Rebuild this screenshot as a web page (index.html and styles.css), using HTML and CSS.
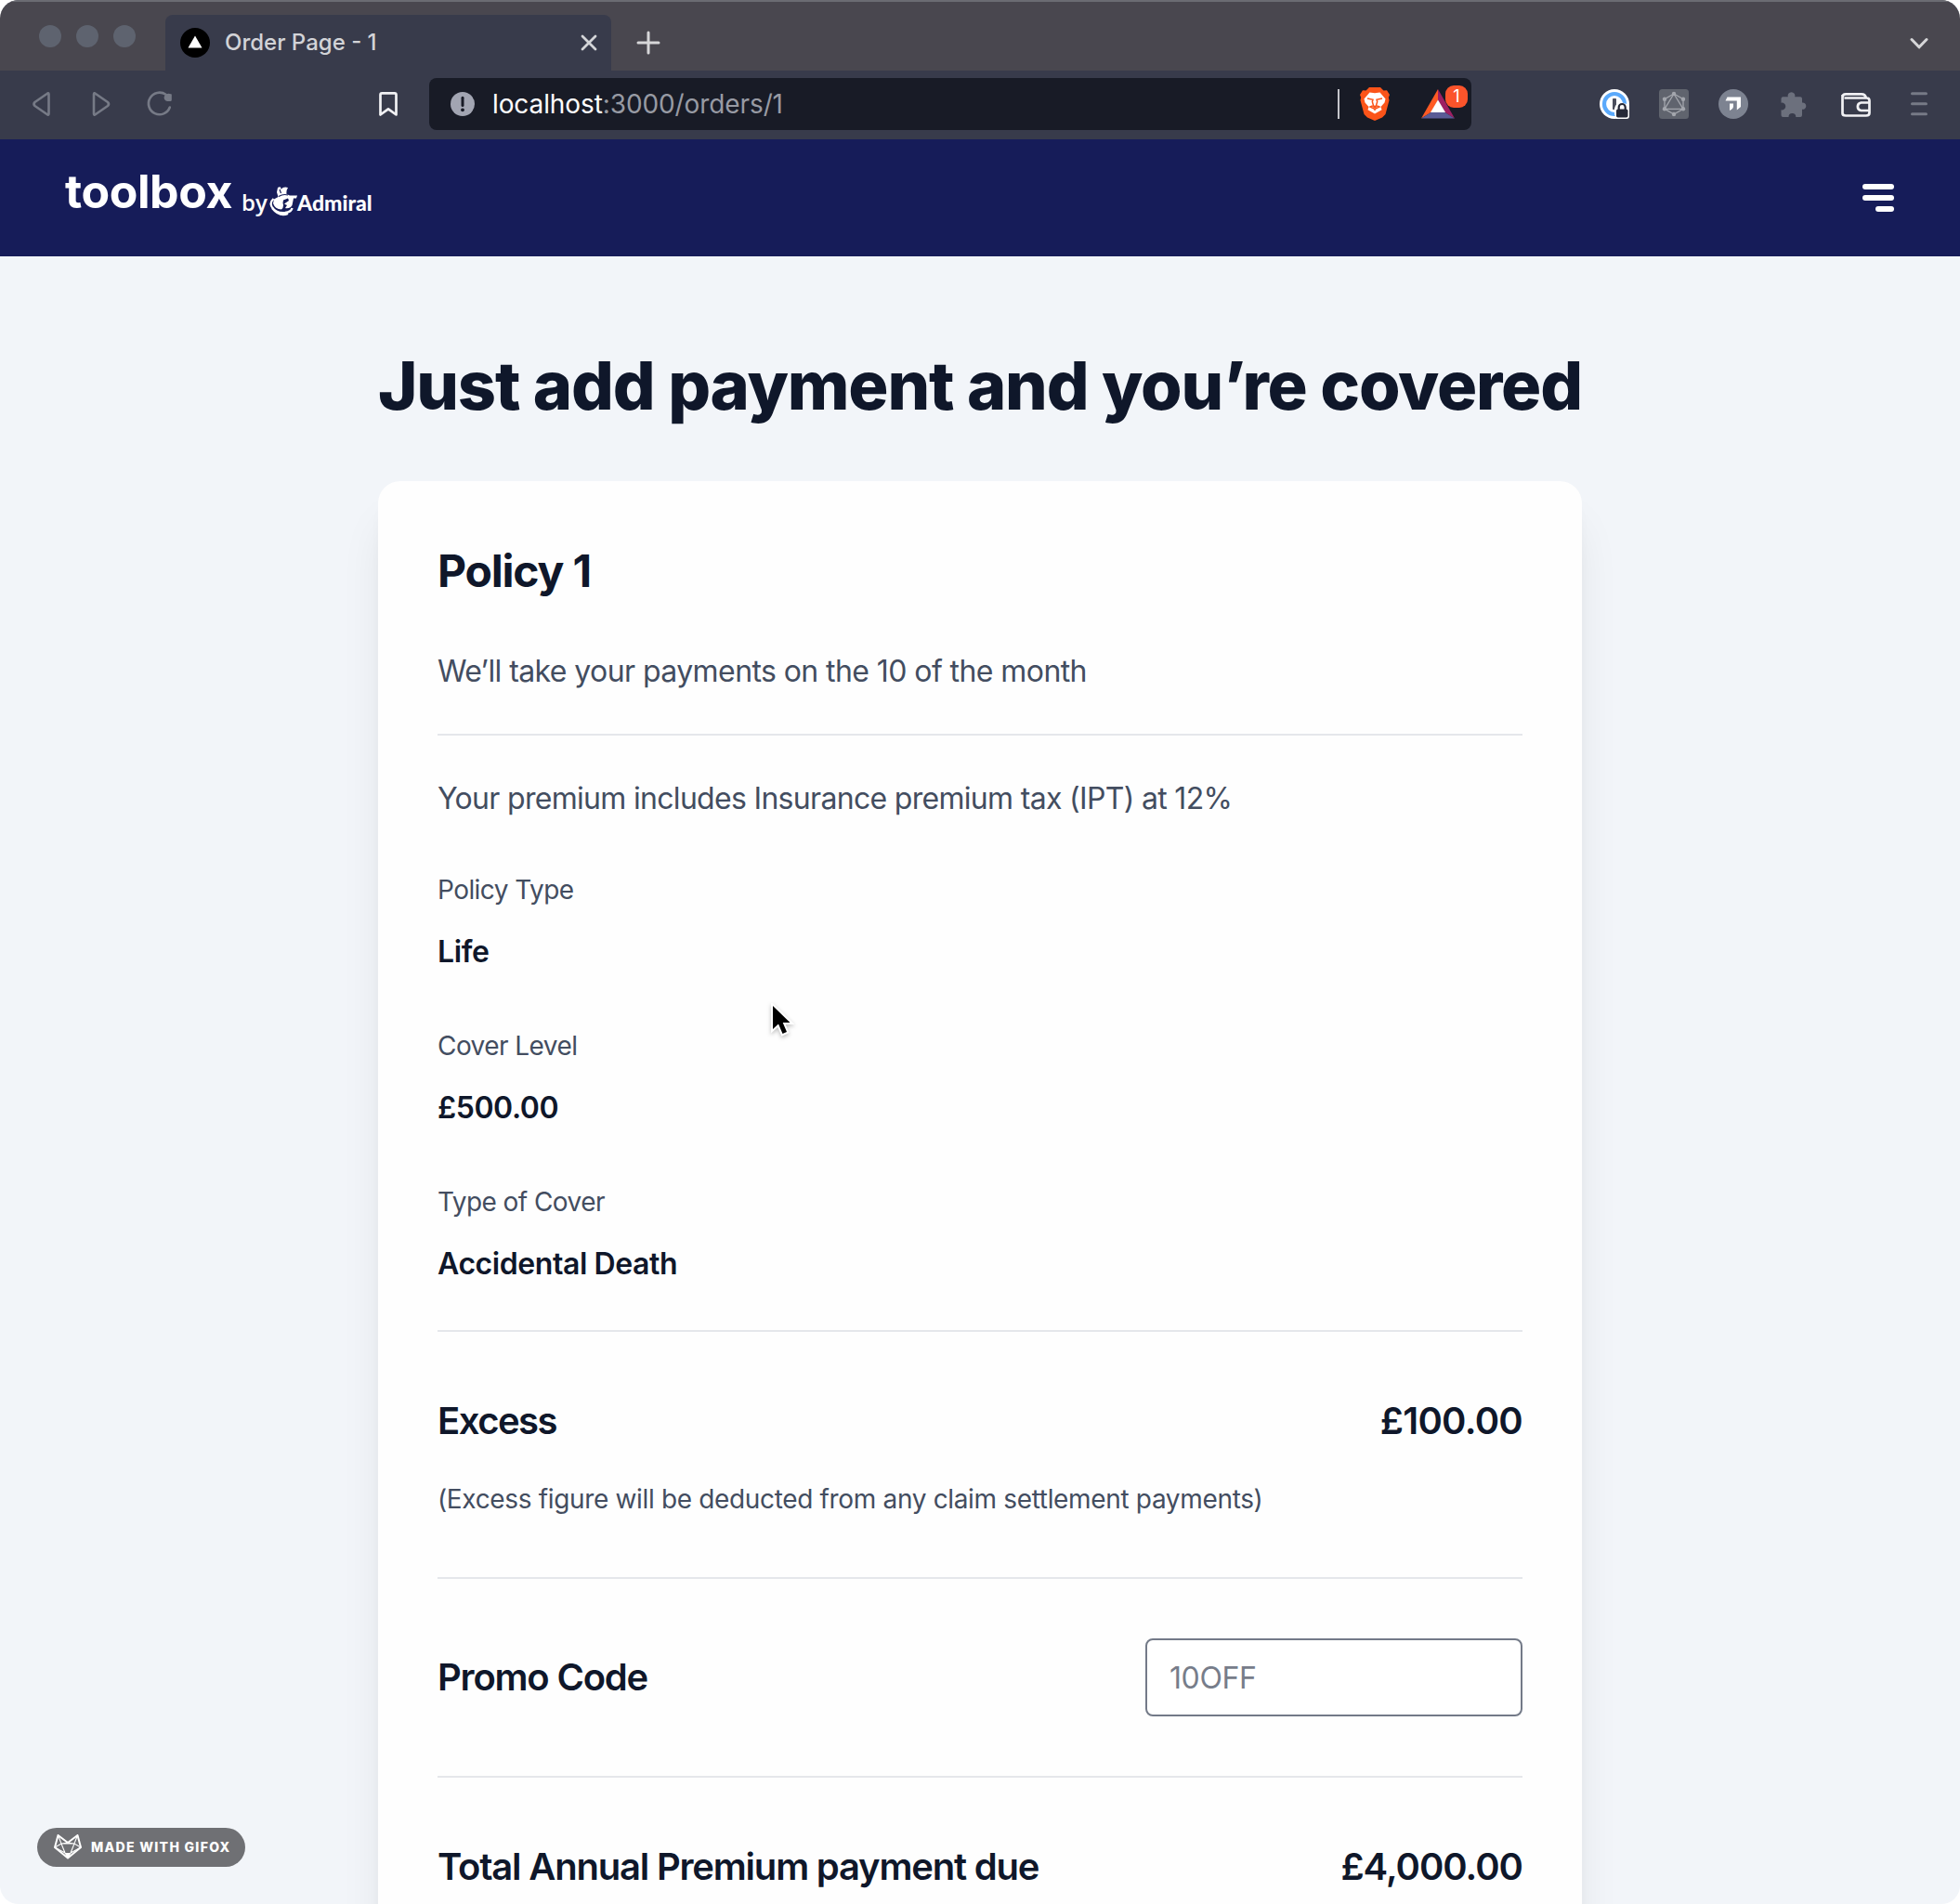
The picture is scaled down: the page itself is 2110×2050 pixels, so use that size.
FILE: index.html
```html
<!DOCTYPE html>
<html lang="en">
<head>
<meta charset="utf-8">
<title>Order Page - 1</title>
<link rel="stylesheet" href="styles.css">
</head>
<body>
<div class="window">
  <div class="tabstrip">
    <div class="lights"><i></i><i></i><i></i></div>
    <div class="tab">
      <svg class="favicon" viewBox="0 0 32 32"><circle cx="16" cy="16" r="16" fill="#000"/><path d="M16 8.500 23.500 21.500H8.500z" fill="#fff"/></svg>
      <span class="tab-title">Order Page - 1</span>
      <svg class="tab-close" viewBox="0 0 18 18"><path d="M2 2 16 16M16 2 2 16" stroke="#d4d5d8" stroke-width="2.800" stroke-linecap="round"/></svg>
    </div>
    <svg class="tab-new" viewBox="0 0 26 26"><path d="M13 2V24M2 13H24" stroke="#d6d6d8" stroke-width="3" stroke-linecap="round"/></svg>
    <svg class="tab-search" viewBox="0 0 20 14"><path d="M2 2.500 10 10.800 18 2.500" fill="none" stroke="#d6d6d8" stroke-width="3" stroke-linecap="round" stroke-linejoin="round"/></svg>
  </div>

  <div class="toolbar">
    <svg class="ico back" viewBox="0 0 32 32"><path d="M23.500 5.500V26.500Q23.500 28.500 21.500 27L8.500 18Q6.500 16 8.500 14L21.500 5Q23.500 3.500 23.500 5.500z" fill="none" stroke="#767a86" stroke-width="2.600" stroke-linejoin="round"/></svg>
    <svg class="ico forward" viewBox="0 0 32 32"><path d="M8 5.500V26.500Q8 28.500 10 27L23 18Q25 16 23 14L10 5Q8 3.500 8 5.500z" fill="none" stroke="#767a86" stroke-width="2.600" stroke-linejoin="round"/></svg>
    <svg class="ico reload" viewBox="0 0 32 32"><path d="M22.500 5.800A11.800 11.800 0 1 0 26.800 19.500" fill="none" stroke="#767a86" stroke-width="2.600" stroke-linecap="round"/><path d="M28.800 5.500V11.500Q28.800 13 27.300 13H24A4 4 0 0 1 21.500 6.500Q24 3.500 28.800 5.500z" fill="#767a86"/></svg>
    <svg class="ico bookmark" viewBox="0 0 32 32"><path d="M7.500 6Q7.500 4.300 9.200 4.300H22.800Q24.500 4.300 24.500 6V27.500L16 21.300 7.500 27.500z" fill="none" stroke="#f1f1f4" stroke-width="2.700" stroke-linejoin="round"/></svg>
    <div class="urlbar">
      <svg class="info" viewBox="0 0 26 26"><circle cx="13" cy="13" r="13" fill="#a2a5b2"/><path d="M13 6.300V14.500" stroke="#181b26" stroke-width="3" stroke-linecap="round"/><circle cx="13" cy="19.300" r="1.900" fill="#181b26"/></svg>
      <span class="url"><b>localhost</b>:3000/orders/1</span>
      <i class="sep"></i>
      <svg class="lion" viewBox="0 0 32 36"><path d="M10 0H22L25.500 3.500 29 3.200 32 8 30.800 11 31.500 14 27.500 29 24 32.500 16 36 8 32.500 4.500 29 .5 14 1.200 11 0 8 3 3.200 6.500 3.500z" fill="#fb5419"/><path d="M16 6.200 21.500 5.600 27.500 12.500 26.500 16.500 22.500 21 23.500 24.300 16 28.500 8.500 24.300 9.500 21 5.500 16.500 4.500 12.500 10.500 5.600z" fill="#fff"/><path d="M8 12 14 13.300 13.300 15.500 14.500 19.500 11 21 16 23.500 21 21 17.500 19.500 18.700 15.500 18 13.300 24 12M16 23.500V25" fill="none" stroke="#fb5419" stroke-width="1.500"/><path d="M13 20.700 16 19.500 19 20.700 16 22.800z" fill="#fb5419"/></svg>
      <div class="bat">
        <svg viewBox="0 0 36 32"><path d="M18 0V12L10.500 25 0 31.500z" fill="#ff5a24"/><path d="M18 0 36 31.500 25.500 25 18 12z" fill="#9e1f63"/><path d="M0 31.500 10.500 25H25.500L36 31.500z" fill="#5a5b96"/><path d="M18 11.500 26 25H10z" fill="#fff"/></svg>
        <span class="badge">1</span>
      </div>
    </div>
    <svg class="ico onepass" viewBox="0 0 32 32"><circle cx="16" cy="16" r="16" fill="#fff"/><circle cx="16" cy="16" r="11" fill="none" stroke="#5aa9fb" stroke-width="4.200"/><rect x="14" y="10" width="4" height="12" rx=".8" fill="#4b4e5c"/><path d="M16 27V21Q17 15 23 14L32 17V29Q32 32 29 32H18Z" fill="#fff"/><rect x="18" y="21.500" width="12.500" height="9" rx="1.800" fill="#262938"/><path d="M20.700 22V19.500A3.500 3.500 0 0 1 27.700 19.500V22" fill="none" stroke="#262938" stroke-width="2.200"/></svg>
    <svg class="ico graphql" viewBox="0 0 32 32"><rect width="32" height="32" rx="3.500" fill="#60646e"/><g fill="none" stroke="#a3a6ad" stroke-width="1.300"><path d="M16 5 26 10.700V21.300L16 27 6 21.300V10.700z"/><path d="M16 5 26 21.300H6z"/></g><g fill="#a3a6ad"><circle cx="16" cy="5" r="2.200"/><circle cx="26" cy="10.700" r="2.200"/><circle cx="26" cy="21.300" r="2.200"/><circle cx="16" cy="27" r="2.200"/><circle cx="6" cy="21.300" r="2.200"/><circle cx="6" cy="10.700" r="2.200"/></g></svg>
    <svg class="ico arrow" viewBox="0 0 32 32"><circle cx="16" cy="16" r="16" fill="#7d8391"/><path d="M9.500 8.500H24V19L19.800 22.500V12.500H7.500z" fill="#fff"/><path d="M12 15.500H16V18.500Q16 21 12 23z" fill="#fff"/></svg>
    <svg class="ico puzzle" viewBox="0 0 32 32"><path d="M4.500 8.300H9.800A3.900 3.900 0 1 1 17.200 8.300H23Q25 8.300 25 10.300V14.500A3.700 3.700 0 1 1 25 21.800V28Q25 30 23 30H18.300A3.900 3.900 0 1 0 10.500 30H4.500Q2.500 30 2.500 28V22.300A3.900 3.900 0 1 0 2.500 14.700V10.300Q2.500 8.300 4.500 8.300z" fill="#6c707d"/></svg>
    <svg class="ico wallet" viewBox="0 0 32 32"><g fill="none" stroke="#f1f1f4" stroke-width="2.700" stroke-linejoin="round"><path d="M1.500 6V26Q1.500 28.500 5 28.500H27Q30.500 28.500 30.500 25.500V12.500Q30.500 9.500 27.500 9.500H3.500M1.500 9Q1.500 5.300 5 5.300H22Q26 5.300 27 9.500"/><path d="M30.500 14.500H21.500A4.300 4.300 0 0 0 21.500 23H30.500"/></g></svg>
    <svg class="ico menu" viewBox="0 0 32 32"><path d="M8.500 4.700H23.500M8.500 15.700H23.500M8.500 26.700H23.500" stroke="#767a86" stroke-width="3" stroke-linecap="round"/></svg>
  </div>

  <header class="site-header">
    <div class="logo">
      <span class="logo-main">toolbox</span>
      <span class="logo-by">by</span>
      <svg class="logo-crest" viewBox="0 0 32 32"><path d="M9 1Q13-1 12.500 3 15-.5 20 1Q18 4 18.500 8L22 9.500H30L29 12.500H26L24.500 20Q22 24 17 23L19 20 16 18.500 21 15 20 12.500 15 14.500 14.500 17.500Q16 22 13 24.500Q6 24 4 18L5 13.500 9.500 11 8 6z" fill="#fff"/><path d="M4.500 13Q0 17 2.500 21.500 7 29 17 28Q24 27 24.500 23" fill="none" stroke="#fff" stroke-width="2.300"/><path d="M3 23Q11 33 20 29" fill="none" stroke="#fff" stroke-width="2.300"/><path d="M11 3 12.500 7M10 10.500Q15 7.500 20 9" stroke="#161c59" stroke-width="1.200" fill="none"/></svg>
      <span class="logo-admiral">Admiral</span>
    </div>
    <div class="burger"><i></i><i></i><i class="short"></i></div>
  </header>

  <main class="page">
    <h1>Just add payment and you’re covered</h1>
    <section class="card">
      <h2>Policy 1</h2>
      <p class="text pay-day">We’ll take your payments on the 10 of the month</p>
      <hr>
      <p class="text premium">Your premium includes Insurance premium tax (IPT) at 12%</p>
      <dl>
        <div><dt>Policy Type</dt><dd>Life</dd></div>
        <div><dt>Cover Level</dt><dd>£500.00</dd></div>
        <div><dt>Type of Cover</dt><dd>Accidental Death</dd></div>
      </dl>
      <hr>
      <div class="row first"><h3 class="excess">Excess</h3><span class="price small-price">£100.00</span></div>
      <p class="note">(Excess figure will be deducted from any claim settlement payments)</p>
      <hr>
      <div class="row promo"><h3>Promo Code</h3><input type="text" placeholder="10OFF"></div>
      <hr>
      <div class="row first"><h3>Total Annual Premium payment due</h3><span class="price">£4,000.00</span></div>
    </section>
  </main>

  <svg class="cursor" viewBox="0 0 26 38"><path d="M3 3V28L9 22.500 13.500 33 18 31 13.700 21H21.500z" fill="#fff" stroke="#fff" stroke-width="4"/><path d="M3 3V28L9 22.500 13.500 33 18 31 13.700 21H21.500z" fill="#000"/></svg>

  <div class="gifox">
    <svg viewBox="0 0 30 27"><path d="M4.500 1 15 9 25.500 1 29 14 15 25.500 1 14z" fill="none" stroke="#fff" stroke-width="2" stroke-linejoin="round"/><path d="M4.500 1 8 10 15 9 22 10 25.500 1M1 14 8 10 12 20M29 14 22 10 18 20M1 14 12 20M29 14 18 20M8 10H22" fill="none" stroke="#fff" stroke-width="1.100"/><path d="M11.500 20H18.500L15 26.500z" fill="#fff"/></svg>
    <span>MADE WITH GIFOX</span>
  </div>
</div>
</body>
</html>
```
FILE: styles.css
```css
* { box-sizing: border-box; margin: 0; padding: 0; }
html, body { width: 2110px; height: 2050px; overflow: hidden; background: #fff; }
body { font-family: Inter, "Liberation Sans", sans-serif; }
svg { display: block; flex: none; }

.window {
  position: relative;
  width: 2110px;
  height: 2050px;
  overflow: hidden;
  border-radius: 20px;
  background: #f2f5f9;
}

/* browser chrome */
.tabstrip {
  height: 76px;
  display: flex;
  align-items: flex-start;
  background: #49474f;
  border-top: 2px solid #6b6c73;
}
.lights { display: flex; gap: 16px; padding: 25px 0 0 42px; }
.lights i { width: 24px; height: 24px; border-radius: 50%; background: #5e636f; }
.tab {
  width: 480px;
  height: 60px;
  margin: 14px 0 0 32px;
  padding: 0 15px 0 16px;
  display: flex;
  align-items: center;
  background: #383b4b;
  border-radius: 8px 8px 0 0;
}
.favicon { width: 32px; height: 32px; }
.tab-title { margin-left: 16px; font-size: 24px; line-height: 32px; font-weight: 500; color: #d2d3d7; flex: 1; white-space: nowrap; }
.tab-close { width: 18px; height: 18px; }
.tab-new { width: 26px; height: 26px; margin: 31px 0 0 27px; }
.tab-search { width: 20px; height: 14px; margin: 38px 34px 0 auto; }

.toolbar {
  height: 74px;
  padding: 0 28px 2px 29px;
  display: flex;
  align-items: center;
  background: #383b4b;
}
.ico { width: 32px; height: 32px; }
.forward { margin-left: 32px; }
.reload { margin-left: 31px; }
.bookmark { margin-left: 214px; }
.urlbar {
  width: 1122px;
  height: 56px;
  margin-left: 28px;
  padding: 0 18px 0 23px;
  display: flex;
  align-items: center;
  background: #181b26;
  border-radius: 8px;
}
.info { width: 26px; height: 26px; }
.url { flex: 1; margin-left: 19px; font-size: 28px; line-height: 40px; letter-spacing: -0.1px; color: #979aa3; white-space: nowrap; }
.url b { font-weight: 400; color: #fff; }
.sep { width: 2px; height: 32px; background: #c4c5ca; }
.lion { width: 32px; height: 36px; margin-left: 22px; }
.bat { position: relative; width: 36px; height: 32px; margin-left: 34px; }
.bat svg { width: 36px; height: 32px; }
.badge {
  position: absolute;
  left: 26px;
  top: -4px;
  width: 24px;
  height: 24px;
  border-radius: 9px;
  background: #fb542b;
  color: #fff;
  font-size: 18px;
  line-height: 24px;
  text-align: center;
}
.onepass { margin-left: 138px; }
.graphql, .arrow { margin-left: 32px; }
.puzzle { margin-left: 33px; }
.wallet { margin-left: 35px; }
.menu { margin-left: 36px; }

/* site header */
.site-header {
  height: 126px;
  padding: 0 71px 0 70px;
  display: flex;
  justify-content: space-between;
  align-items: center;
  background: #161c59;
}
.logo { padding-bottom: 15px; display: flex; align-items: baseline; color: #fff; white-space: nowrap; }
.logo-main { width: 190px; font-size: 50px; line-height: 60px; font-weight: 700; letter-spacing: -0.4px; }
.logo-by { width: 30px; font-family: "Open Sans", sans-serif; font-size: 24px; line-height: 30px; font-weight: 600; position: relative; top: 3px; }
.logo-crest { width: 32px; height: 32px; position: relative; top: 9px; }
.logo-admiral { margin-left: -2px; font-family: Lato, sans-serif; font-size: 23px; line-height: 30px; font-weight: 900; position: relative; top: 3px; }
.burger { display: flex; flex-direction: column; align-items: flex-end; gap: 6px; }
.burger i { width: 34px; height: 6px; border-radius: 3px; background: #fff; }
.burger .short { width: 20px; }

/* order page */
.page { width: 1296px; margin: 0 auto; padding-top: 99px; }
h1 { font-size: 72px; line-height: 80px; font-weight: 800; letter-spacing: -1.17px; color: #0f172a; white-space: nowrap; }
.card {
  height: 1600px;
  margin-top: 63px;
  padding: 65px 64px 64px;
  background: #fefefe;
  border-radius: 24px;
  box-shadow: 0 40px 50px -10px rgba(0, 0, 0, .1), 0 16px 20px -12px rgba(0, 0, 0, .1);
}
h2 { font-size: 48px; line-height: 64px; font-weight: 700; letter-spacing: -0.025em; color: #0f172a; }
.text { font-size: 32px; line-height: 48px; color: #434d60; white-space: nowrap; }
.pay-day { margin: 52px 0 43px; letter-spacing: -0.58px; }
.premium { margin: 44px 0 54px; letter-spacing: -0.69px; }
hr { height: 2px; border: 0; background: #e5e7eb; }
dl { display: flex; flex-direction: column; gap: 57px; margin-bottom: 47px; }
dt { font-size: 28px; line-height: 40px; letter-spacing: -0.56px; color: #434d60; }
dd { margin-top: 23px; font-size: 32px; line-height: 48px; font-weight: 600; letter-spacing: -0.42px; color: #0f172a; }
.row { display: flex; justify-content: space-between; align-items: center; }
.first { margin-top: 68px; }
h3, .price { font-size: 40px; line-height: 56px; font-weight: 600; color: #0f172a; }
h3 { letter-spacing: -1.2px; }
.excess { letter-spacing: -1.5px; }
.price { letter-spacing: -1px; }
.small-price { letter-spacing: -0.7px; }
.note { margin: 36px 0 64px; font-size: 28px; line-height: 40px; letter-spacing: -0.34px; color: #434d60; white-space: nowrap; }
.promo { margin: 64px 0; }
input {
  width: 406px;
  height: 84px;
  padding: 0 24px;
  border: 2px solid #737a88;
  border-radius: 8px;
  background: #fff;
  font: 400 32px/48px Inter, sans-serif;
  letter-spacing: -0.4px;
}
input::placeholder { color: #777d8a; opacity: 1; }

/* overlays */
.cursor { position: absolute; left: 829px; top: 1080px; width: 26px; height: 38px; filter: drop-shadow(0 2px 2px rgba(0, 0, 0, .25)); }
.gifox {
  position: absolute;
  left: 40px;
  top: 1968px;
  width: 224px;
  height: 42px;
  padding: 0 0 1px 18px;
  display: flex;
  align-items: center;
  border-radius: 21px;
  background: #6f7074;
  color: #fff;
  font-size: 14px;
  font-weight: 800;
  letter-spacing: 1.3px;
  white-space: nowrap;
}
.gifox svg { width: 30px; height: 27px; }
.gifox span { margin-left: 10px; }
```
